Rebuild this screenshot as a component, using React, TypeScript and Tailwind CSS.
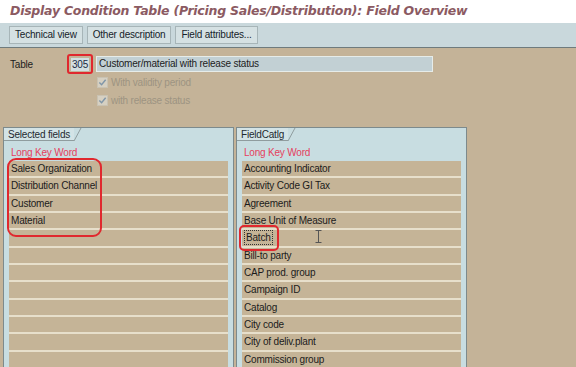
import React from 'react'

const selected = ['Sales Organization', 'Distribution Channel', 'Customer', 'Material']
const catalog = [
  'Accounting Indicator',
  'Activity Code GI Tax',
  'Agreement',
  'Base Unit of Measure',
  'Batch',
  'Bill-to party',
  'CAP prod. group',
  'Campaign ID',
  'Catalog',
  'City code',
  'City of deliv.plant',
  'Commission group',
]

function CheckRow({ label }: { label: string }) {
  return (
    <div className="flex items-center gap-[3px] h-[18px]">
      <span className="w-[11px] h-[11px] border border-[#c9c2b2] bg-[#d6d0c2] flex items-center justify-center">
        <svg viewBox="0 0 10 10" className="w-[9px] h-[9px]">
          <path d="M1.5 5 L4 7.5 L8.5 2" fill="none" stroke="#8096a8" strokeWidth="1.6" />
        </svg>
      </span>
      <span className="text-[#9d9482]">{label}</span>
    </div>
  )
}

function Panel({ tab, rows, children }: { tab: string; rows: string[]; children?: React.ReactNode }) {
  const filled = [...rows]
  while (filled.length < 12) filled.push('')
  return (
    <div className="relative w-[231px] h-[240px] bg-[#c8dde1] border-l border-t border-r border-[#7d8a8c] overflow-hidden">
      <div className="flex h-[13px]">
        <div className="px-[4px] leading-[13px] bg-[#d3e3e6] border-b border-[#8f9c9e] text-[#1e2a30]">{tab}</div>
        <svg viewBox="0 0 8 13" className="w-[8px] h-[13px]">
          <path d="M0 13 L7 0" stroke="#8f9c9e" strokeWidth="1" fill="none" />
        </svg>
      </div>
      <div className="px-[5px] pt-[5px]">
        <div className="h-[14px] leading-[14px] pl-[2px] text-[#e5405e]">Long Key Word</div>
        <div className="flex flex-col mt-[1px]">
          {filled.map((r, i) => (
            <div
              key={i}
              className="h-[17.33px] leading-[15px] pl-[2px] bg-[#c5b497] border-b-2 border-[#e7dfcb] text-[#1b1b1b]"
            >
              {r === 'Batch' ? (
                <span className="inline-block leading-[13px] px-[1px] border border-dotted border-[#333]">{r}</span>
              ) : (
                r
              )}
            </div>
          ))}
        </div>
      </div>
      {children}
    </div>
  )
}

export default function App() {
  return (
    <div
      className="w-[576px] h-[367px] bg-[#c4b398] overflow-hidden text-[10px] tracking-[-0.2px]"
      style={{ fontFamily: '"Liberation Sans", Arial, sans-serif' }}
    >
      <div className="h-[23px] bg-white flex items-center pl-[10px]">
        <h1
          className="text-[12.5px] font-bold italic text-[#8b5a62] tracking-[-0.25px]"
          style={{ fontFamily: '"DejaVu Sans", Verdana, sans-serif' }}
        >
          Display Condition Table (Pricing Sales/Distribution): Field Overview
        </h1>
      </div>
      <div className="h-[25px] bg-[#c9d8dc] border-b border-[#6f7b7d] flex items-center gap-[4px] pl-[9px]">
        {['Technical view', 'Other description', 'Field attributes...'].map((b) => (
          <button
            key={b}
            className="h-[18px] px-[5px] bg-[#d5e1e3] border border-[#a7b5b8] text-[#16232a] leading-[16px]"
          >
            {b}
          </button>
        ))}
      </div>

      <div className="px-[10px] pt-[7px] h-[79px]">
        <div className="flex items-center h-[18px]">
          <span className="w-[57px] text-[#1c1c1c]">Table</span>
          <div className="w-[26px] h-[20px] border-2 border-[#e0282e] rounded-[3px] flex items-center justify-center">
            <span className="bg-[#d3dfe2] px-[1px] leading-[13px] text-[#1b2a44]">305</span>
          </div>
          <div className="ml-[3px] w-[337px] h-[16px] bg-[#c2d0d4] border border-[#e6ece9] leading-[14px] pl-[2px] text-[#1c1c1c]">
            Customer/material with release status
          </div>
        </div>
        <div className="pl-[87px]">
          <CheckRow label="With validity period" />
          <CheckRow label="with release status" />
        </div>
      </div>

      <div className="flex gap-[2px] pl-[3px]">
        <Panel tab="Selected fields" rows={selected}>
          <div className="absolute left-[3px] top-[30px] w-[95px] h-[79px] border-2 border-[#e0282e] rounded-[9px]" />
        </Panel>
        <Panel tab="FieldCatlg" rows={catalog}>
          <div className="absolute left-[2px] top-[97px] w-[40px] h-[26px] border-2 border-[#e0282e] rounded-[5px]" />
          <svg viewBox="0 0 7 13" className="absolute left-[78px] top-[102px] w-[7px] h-[13px]">
            <path d="M0.5 0.5 H6.5 M3.5 0.5 V12.5 M0.5 12.5 H6.5" stroke="#555" strokeWidth="1" fill="none" />
          </svg>
        </Panel>
      </div>
    </div>
  )
}
